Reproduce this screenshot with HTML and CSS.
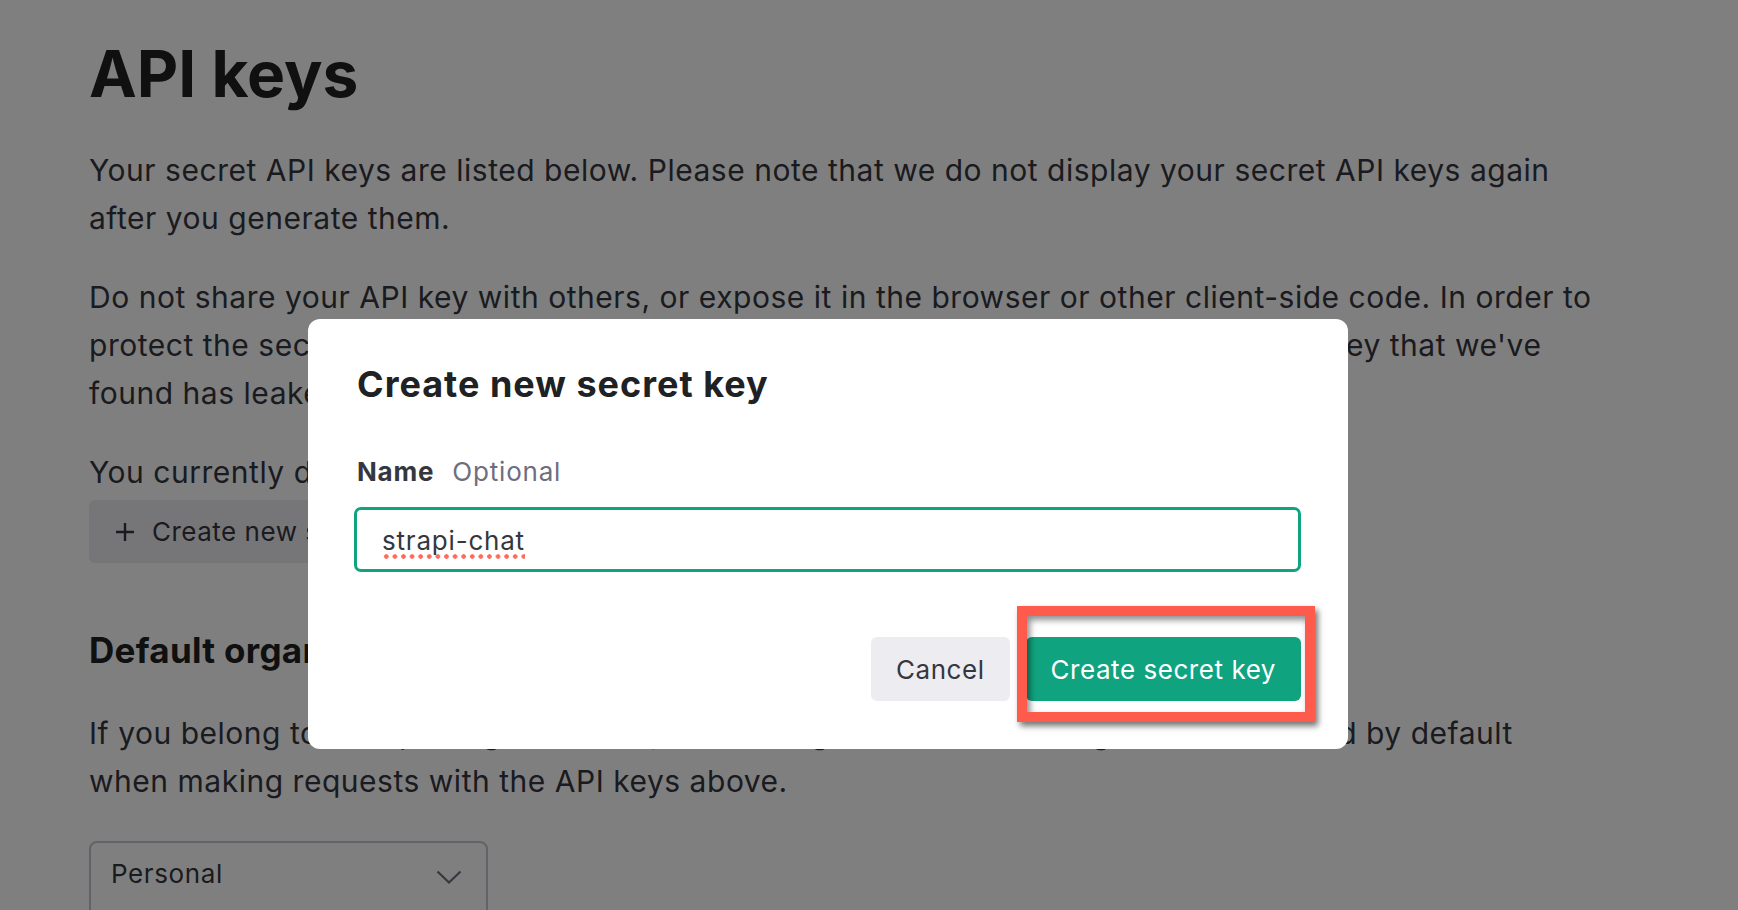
FILE: index.html
```html
<!DOCTYPE html>
<html lang="en">
<head>
<meta charset="utf-8">
<title>API keys</title>
<link rel="stylesheet" href="styles.css">
</head>
<body>
<main class="page">
  <h1 class="title">API keys</h1>
  <p class="para">Your secret API keys are listed below. Please note that we do not display your secret API keys again<br>after you generate them.</p>
  <p class="para">Do not share your API key with others, or expose it in the browser or other client-side code. In order to<br>protect the security of your account, OpenAI may also automatically disable any API key that we've<br>found has leaked publicly.</p>
  <p class="para para-tight">You currently do not have any API keys. Please create one below.</p>
  <button class="ghost-btn" type="button">
    <svg class="plus" width="20" height="20" viewBox="0 0 20 20"><path d="M10 1v18M1 10h18" stroke="currentColor" stroke-width="2.4" fill="none"/></svg>
    <span>Create new secret key</span>
  </button>
  <h2 class="subtitle">Default organization</h2>
  <p class="para">If you belong to multiple organizations, this setting controls which organization is used by default<br>when making requests with the API keys above.</p>
  <div class="select">
    <span>Personal</span>
    <svg class="chevron" width="26" height="14" viewBox="0 0 26 14"><path d="M1.5 1.5l11.5 11 11.5-11" stroke="currentColor" stroke-width="2.2" fill="none"/></svg>
  </div>
</main>

<div class="overlay">
  <div class="modal">
    <h3 class="modal-title">Create new secret key</h3>
    <div class="field-label"><span class="label-name">Name</span><span class="label-opt">Optional</span></div>
    <div class="input"><span class="misspelled">strapi-chat</span></div>
    <div class="actions">
      <button class="btn btn-cancel" type="button">Cancel</button>
      <button class="btn btn-primary" type="button">Create secret key</button>
    </div>
    <div class="annotation"></div>
  </div>
</div>
</body>
</html>
```

FILE: styles.css
```css
* { box-sizing: border-box; }

html, body {
  margin: 0;
  padding: 0;
  background: #ffffff;
  height: 100%;
  overflow: hidden;
}

body {
  font-family: Inter, "Liberation Sans", Arial, sans-serif;
  color: #353740;
}

.page {
  padding: 36px 0 0 89px;
}

.title {
  margin: 0;
  font-size: 64px;
  line-height: 76px;
  font-weight: 700;
  color: #202123;
  letter-spacing: 0;
}

.para {
  margin: 34px 0 0;
  font-size: 30px;
  line-height: 48px;
  letter-spacing: 0.52px;
  white-space: nowrap;
}

.para + .para { margin-top: 31px; }
.para-tight { margin-bottom: 4px; }

.ghost-btn {
  display: flex;
  align-items: center;
  gap: 17px;
  height: 63px;
  padding: 0 26px 0 26px;
  border: 0;
  border-radius: 6px;
  background: #ececf1;
  color: #353740;
  font-family: inherit;
  font-size: 26px;
  letter-spacing: 0.5px;
}

.plus { flex: none; }

.subtitle {
  margin: 65px 0 0;
  font-size: 35px;
  line-height: 44px;
  font-weight: 700;
  color: #202123;
  letter-spacing: 0.3px;
}

.subtitle + .para { margin-top: 37px; }

.select {
  margin-top: 36px;
  width: 399px;
  height: 80px;
  border: 2px solid #c5c5d2;
  border-radius: 8px;
  display: flex;
  align-items: flex-start;
  justify-content: space-between;
  padding: 13px 24px 0 20px;
  font-size: 26px;
  line-height: 36px;
  letter-spacing: 0.6px;
}

.chevron { margin-top: 14px; color: #6e6e80; }

.overlay {
  position: fixed;
  inset: 0;
  background: rgba(0, 0, 0, 0.5);
  display: flex;
  align-items: flex-start;
  padding: 319px 0 0 308px;
}

.modal {
  position: relative;
  width: 1040px;
  height: 430px;
  background: #ffffff;
  border-radius: 12px;
  padding: 43px 47px 47px 49px;
}

.modal-title {
  margin: 0;
  font-size: 36px;
  line-height: 44px;
  font-weight: 700;
  color: #202123;
  letter-spacing: 1px;
}

.field-label {
  margin-top: 48px;
  display: flex;
  gap: 18px;
  font-size: 26px;
  line-height: 36px;
  letter-spacing: 0.8px;
}

.label-name { font-weight: 700; color: #353740; }
.label-opt { color: #6e6e80; }

.input {
  margin-top: 17px;
  margin-left: -3px;
  height: 65px;
  border: 3px solid #10a37f;
  border-radius: 7px;
  display: flex;
  align-items: flex-start;
  padding: 16px 0 0 25px;
  font-size: 26px;
  color: #353740;
  letter-spacing: 0.8px;
}

.misspelled {
  padding-bottom: 3px;
  background-image: radial-gradient(circle, #ff6b5b 2px, transparent 2.5px);
  background-size: 8.6px 5px;
  background-repeat: repeat-x;
  background-position: 0 100%;
  line-height: 30px;
}

.actions {
  margin-top: 65px;
  display: flex;
  justify-content: flex-end;
  gap: 16px;
}

.btn {
  height: 64px;
  padding: 0 25px;
  border: 0;
  border-radius: 6px;
  font-family: inherit;
  font-size: 26px;
  letter-spacing: 0.55px;
}

.btn-cancel { background: #ececf1; color: #353740; }
.btn-primary { background: #10a37f; color: #ffffff; }

.annotation {
  position: absolute;
  left: 709px;
  top: 287px;
  width: 298px;
  height: 116px;
  border: 10px solid #fe5b4d;
  box-shadow: 3px 4px 6px rgba(0, 0, 0, 0.55), inset 3px 4px 6px rgba(0, 0, 0, 0.45);
  pointer-events: none;
}
```
